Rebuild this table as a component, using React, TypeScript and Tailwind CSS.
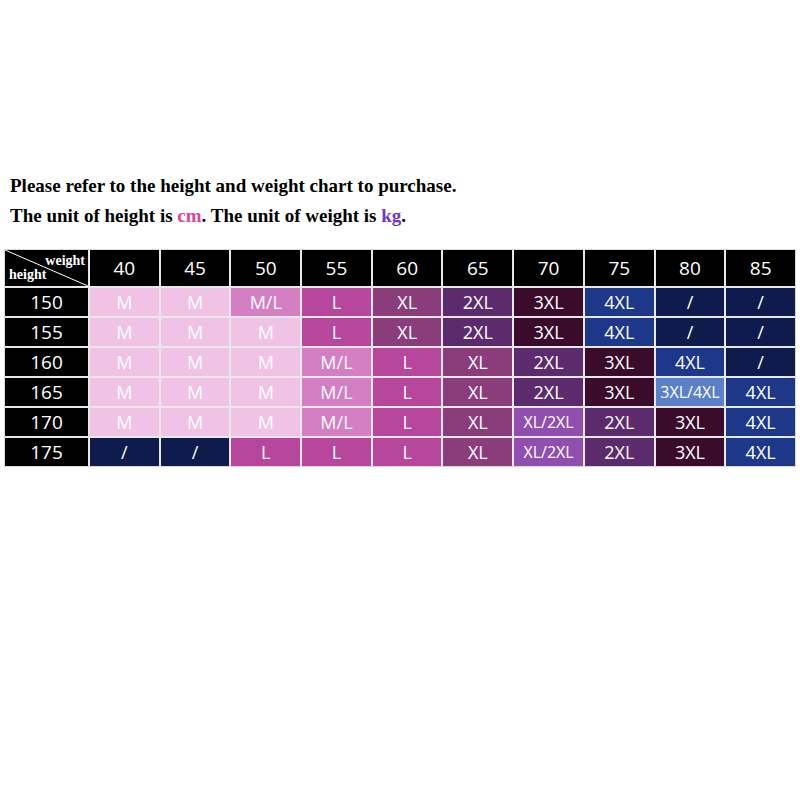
import React from 'react';

const weights = [40, 45, 50, 55, 60, 65, 70, 75, 80, 85];

const rows: { height: number; sizes: string[] }[] = [
  { height: 150, sizes: ['M', 'M', 'M/L', 'L', 'XL', '2XL', '3XL', '4XL', '/', '/'] },
  { height: 155, sizes: ['M', 'M', 'M', 'L', 'XL', '2XL', '3XL', '4XL', '/', '/'] },
  { height: 160, sizes: ['M', 'M', 'M', 'M/L', 'L', 'XL', '2XL', '3XL', '4XL', '/'] },
  { height: 165, sizes: ['M', 'M', 'M', 'M/L', 'L', 'XL', '2XL', '3XL', '3XL/4XL', '4XL'] },
  { height: 170, sizes: ['M', 'M', 'M', 'M/L', 'L', 'XL', 'XL/2XL', '2XL', '3XL', '4XL'] },
  { height: 175, sizes: ['/', '/', 'L', 'L', 'L', 'XL', 'XL/2XL', '2XL', '3XL', '4XL'] },
];

const sizeColor = (size: string) => {
  switch (size) {
    case 'M': return 'bg-[#efc2e6]';
    case 'M/L': return 'bg-[#d47ec3]';
    case 'L': return 'bg-[#b7469d]';
    case 'XL': return 'bg-[#8b3c7b]';
    case 'XL/2XL': return 'bg-[#904fae]';
    case '2XL': return 'bg-[#5c2b6e]';
    case '3XL': return 'bg-[#3a0b2b]';
    case '3XL/4XL': return 'bg-[#5b80c8]';
    case '4XL': return 'bg-[#1e3889]';
    default: return 'bg-[#0e1b4c]';
  }
};

const App: React.FC = () => {
  return (
    <div className="w-[800px] h-[800px] bg-white pt-[171px]">
      <div className="px-[10px] font-['Liberation_Serif',serif] font-bold text-[19px] text-black leading-[30px]">
        <p>Please refer to the height and weight chart to purchase.</p>
        <p>
          The unit of height is <span className="text-[#e0409c]">cm</span>. The unit of weight is{' '}
          <span className="text-[#7236c4]">kg</span>.
        </p>
      </div>

      <div className="mt-[18px] mx-[4px] border border-[#d8d8d8] bg-[#e8e8e8] grid grid-cols-[83px_repeat(10,1fr)] gap-[2px] font-['Open_Sans',sans-serif] font-medium text-white">
        <div className="relative h-[36px] bg-black overflow-hidden font-['Liberation_Serif',serif] font-bold text-[14px] leading-none">
          <svg className="absolute inset-0" width="83" height="36" viewBox="0 0 83 36">
            <line x1="0" y1="0" x2="83" y2="36" stroke="white" strokeWidth="1" />
          </svg>
          <span className="absolute top-[4px] right-[3px]">weight</span>
          <span className="absolute bottom-[4px] left-[4px]">height</span>
        </div>
        {weights.map((w) => (
          <div key={w} className="h-[36px] bg-black flex items-center justify-center text-[19px]">
            {w}
          </div>
        ))}

        {rows.map((row) => (
          <React.Fragment key={row.height}>
            <div className="h-[28px] bg-black flex items-center justify-center text-[19px]">{row.height}</div>
            {row.sizes.map((s, i) => (
              <div
                key={i}
                className={`h-[28px] flex items-center justify-center ${s.length > 5 ? 'text-[16px]' : 'text-[18px]'} ${sizeColor(s)}`}
              >
                {s}
              </div>
            ))}
          </React.Fragment>
        ))}
      </div>
    </div>
  );
};

export default App;
